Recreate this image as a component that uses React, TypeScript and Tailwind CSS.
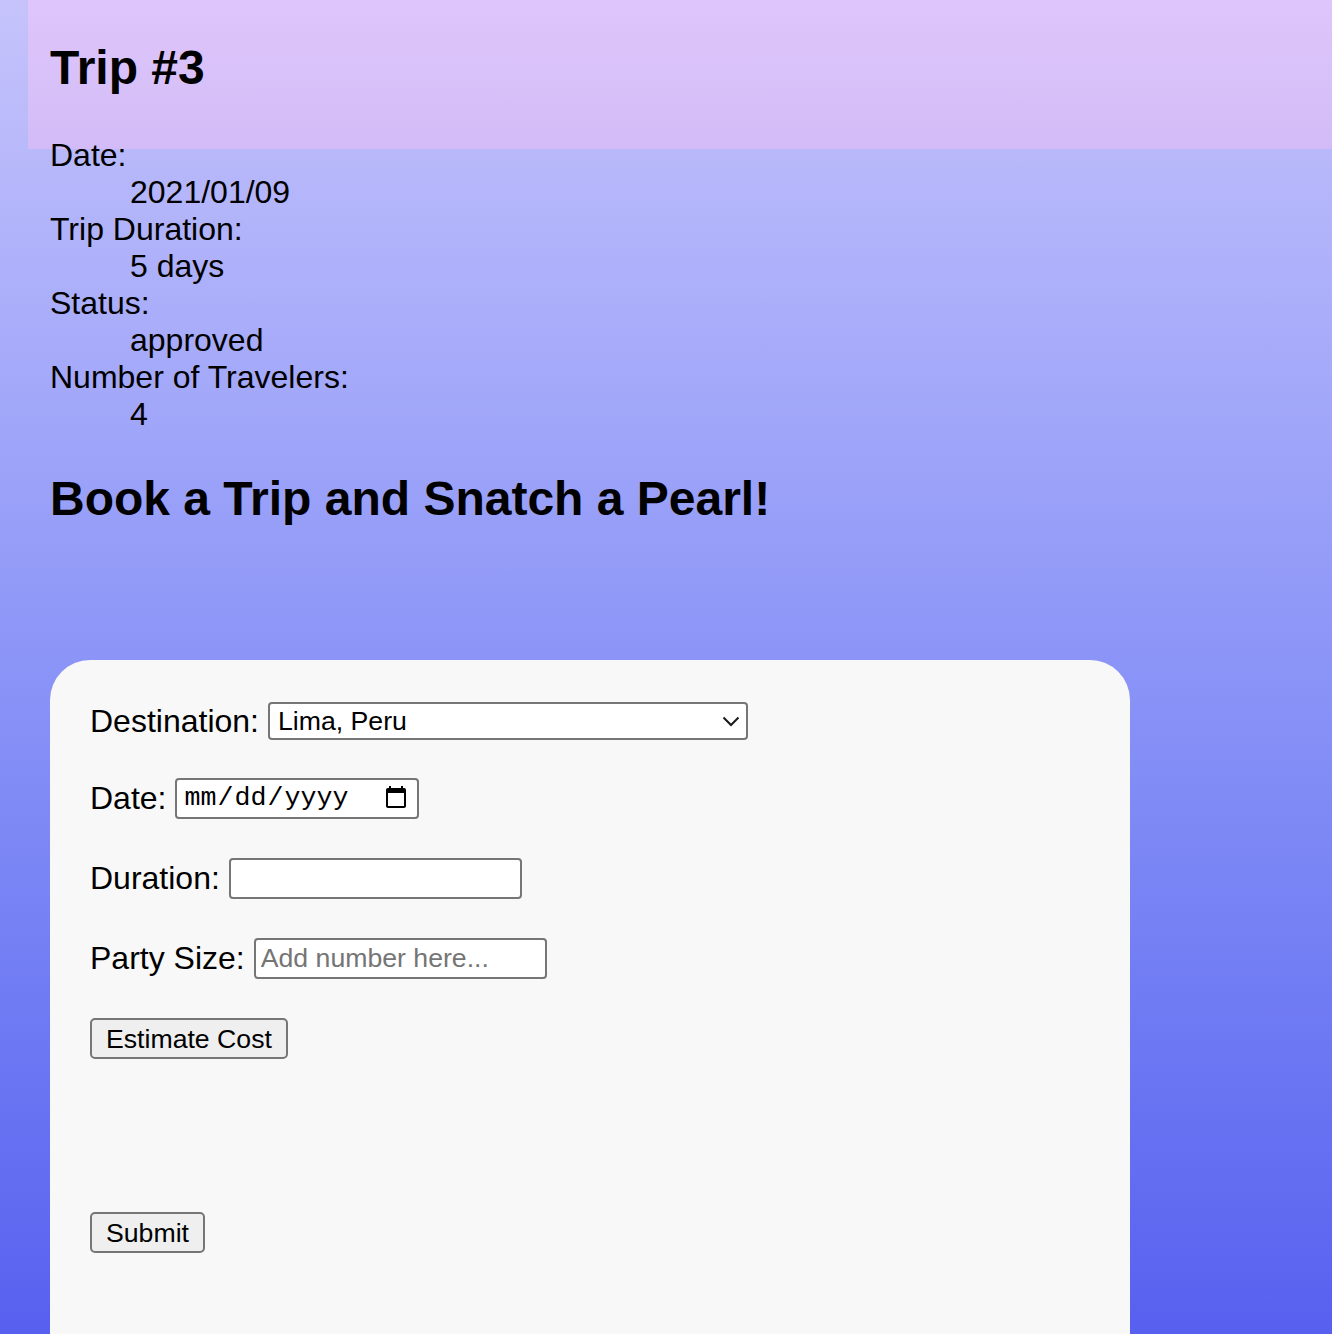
import React from "react";

export default function App() {
  return (
    <div className="min-h-[1334px] w-full bg-gradient-to-b from-[#c6c3fb] to-[#5760ef] font-['Liberation_Sans',Arial,sans-serif] text-black overflow-hidden">
      <div className="ml-[28px] h-[149px] pl-[22px] pt-[40px] bg-gradient-to-b from-[#dec6fb] to-[#d3bbf7]">
        <h2 className="text-[48px] font-bold leading-[55px]">Trip #3</h2>
      </div>
      <dl className="relative ml-[50px] -mt-[12.5px] text-[32px] leading-[37px]">
        <dt>Date:</dt>
        <dd className="ml-[80px]">2021/01/09</dd>
        <dt>Trip Duration:</dt>
        <dd className="ml-[80px]">5 days</dd>
        <dt>Status:</dt>
        <dd className="ml-[80px]">approved</dd>
        <dt>Number of Travelers:</dt>
        <dd className="ml-[80px]">4</dd>
      </dl>
      <h2 className="ml-[50px] mt-[38.5px] text-[48px] font-bold leading-[55px]">
        Book a Trip and Snatch a Pearl!
      </h2>
      <form
        className="ml-[50px] mt-[134px] h-[674px] w-[1080px] rounded-t-[40px] bg-[#f8f8f8] pl-[40px] pt-[42px] text-[32px] leading-[36.8px]"
        onSubmit={(e) => e.preventDefault()}
      >
        <div className="flex h-[38px] items-center gap-[9px]">
          <label htmlFor="dest">Destination:</label>
          <div className="relative">
            <select
              id="dest"
              defaultValue="lima"
              className="block h-[38px] w-[480px] appearance-none rounded-[4px] border-2 border-[#767676] bg-white pl-[8px] text-[26.67px] leading-[30px] text-black"
            >
              <option value="lima">Lima, Peru</option>
              <option value="cusco">Cusco, Peru</option>
            </select>
            <svg
              className="pointer-events-none absolute right-[8px] top-[14px]"
              width="18"
              height="11"
              viewBox="0 0 18 11"
              fill="none"
            >
              <path d="M1.5 1.5 L9 9 L16.5 1.5" stroke="#1a1a1a" strokeWidth="2" />
            </svg>
          </div>
        </div>

        <div className="mt-[38px] flex h-[41px] items-center gap-[9px]">
          <label htmlFor="date">Date:</label>
          <input
            id="date"
            type="date"
            className="block h-[41px] w-[244px] rounded-[4px] border-2 border-[#767676] bg-white px-[6px] font-['Liberation_Mono',monospace] text-[26.67px] text-black"
          />
        </div>

        <div className="mt-[39px] flex h-[41px] items-center gap-[9px]">
          <label htmlFor="dur">Duration:</label>
          <input
            id="dur"
            type="text"
            className="block h-[41px] w-[293px] rounded-[4px] border-2 border-[#767676] bg-white px-[5px] text-[26.67px] text-black"
          />
        </div>

        <div className="mt-[39px] flex h-[41px] items-center gap-[9px]">
          <label htmlFor="party">Party Size:</label>
          <input
            id="party"
            type="text"
            placeholder="Add number here..."
            className="block h-[41px] w-[293px] rounded-[4px] border-2 border-[#767676] bg-white px-[5px] text-[26.67px] text-black placeholder:text-[#757575]"
          />
        </div>

        <div className="mt-[39px] flex">
          <button
            type="button"
            className="h-[41px] rounded-[5px] border-2 border-[#767676] bg-[#efefef] px-[14px] text-[26.67px] leading-[30px]"
          >
            Estimate Cost
          </button>
        </div>

        <div className="mt-[153px] flex">
          <button
            type="submit"
            className="h-[41px] rounded-[5px] border-2 border-[#767676] bg-[#efefef] px-[14px] text-[26.67px] leading-[30px]"
          >
            Submit
          </button>
        </div>
      </form>
    </div>
  );
}
